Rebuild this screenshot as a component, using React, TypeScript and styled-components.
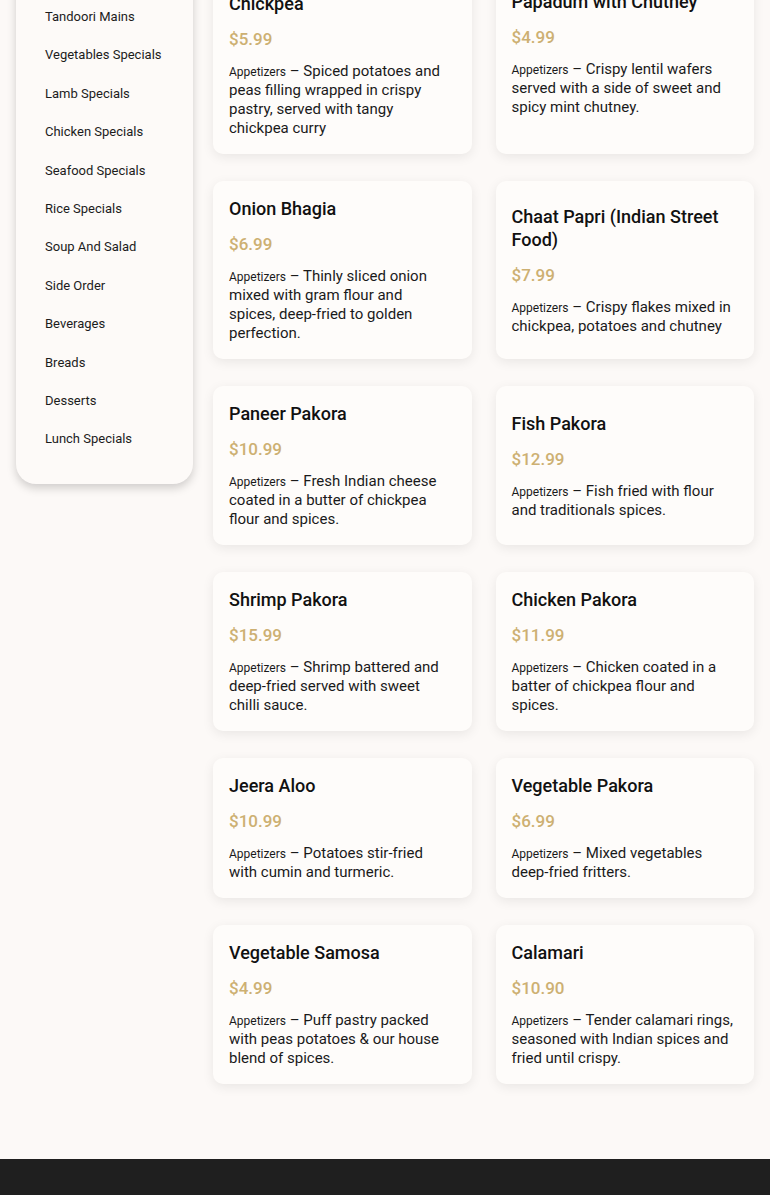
import React from 'react';
import styled, { createGlobalStyle } from 'styled-components';

const GlobalStyle = createGlobalStyle`
  html, body {
    margin: 0;
    padding: 0;
    background: #fcf9f7;
    font-family: Roboto, "Noto Sans", sans-serif;
    color: #151515;
    overflow: hidden;
  }
`;

const Page = styled.div`
  background: #fcf9f7;
`;

const MenuSection = styled.section`
  display: flex;
  align-items: flex-start;
  gap: 20px;
  padding: 20px 16px 75px;
  margin-top: -67px;
`;

const Sidebar = styled.nav`
  width: 177px;
  flex-shrink: 0;
  box-sizing: border-box;
  background: #fdfaf8;
  border-radius: 20px;
  box-shadow: 0 4px 10px rgba(0, 0, 0, 0.18);
  padding: 26px 0 26px 29px;
  margin-top: -20px;
`;

const CategoryLink = styled.a`
  display: flex;
  align-items: center;
  height: 38.4px;
  font-size: 13px;
  color: #1c1c1c;
  text-decoration: none;
`;

const Grid = styled.div`
  flex: 1;
  display: grid;
  grid-template-columns: 1fr 1fr;
  gap: 27px 24px;
`;

const Card = styled.article`
  background: #fefcfa;
  border-radius: 10px;
  box-shadow: 0 3px 12px rgba(0, 0, 0, 0.08);
  padding: 16px 20px 16px 16px;
  display: flex;
  flex-direction: column;
  justify-content: center;
`;

const Title = styled.h3`
  margin: 0 0 12px;
  font-size: 18px;
  line-height: 23px;
  font-weight: 500;
  color: #111;
`;

const Price = styled.div`
  font-size: 17px;
  line-height: 24px;
  font-weight: 500;
  color: #cdb072;
  margin-bottom: 11px;
`;

const Description = styled.p`
  margin: 0;
  font-size: 15px;
  line-height: 19px;
  color: #1a1a1a;
`;

const Category = styled.span`
  font-size: 12px;
  line-height: 1;
`;

const Footer = styled.footer`
  background: #1f1f1f;
  height: 200px;
`;

const categories = [
  'Appetizers',
  'Tandoori Mains',
  'Vegetables Specials',
  'Lamb Specials',
  'Chicken Specials',
  'Seafood Specials',
  'Rice Specials',
  'Soup And Salad',
  'Side Order',
  'Beverages',
  'Breads',
  'Desserts',
  'Lunch Specials',
];

const items = [
  { name: 'Samosa Chaat with Chickpea', price: '$5.99', desc: 'Spiced potatoes and peas filling wrapped in crispy pastry, served with tangy chickpea curry' },
  { name: 'Papadum with Chutney', price: '$4.99', desc: 'Crispy lentil wafers served with a side of sweet and spicy mint chutney.' },
  { name: 'Onion Bhagia', price: '$6.99', desc: 'Thinly sliced onion mixed with gram flour and spices, deep-fried to golden perfection.' },
  { name: 'Chaat Papri (Indian Street Food)', price: '$7.99', desc: 'Crispy flakes mixed in chickpea, potatoes and chutney' },
  { name: 'Paneer Pakora', price: '$10.99', desc: 'Fresh Indian cheese coated in a butter of chickpea flour and spices.' },
  { name: 'Fish Pakora', price: '$12.99', desc: 'Fish fried with flour and traditionals spices.' },
  { name: 'Shrimp Pakora', price: '$15.99', desc: 'Shrimp battered and deep-fried served with sweet chilli sauce.' },
  { name: 'Chicken Pakora', price: '$11.99', desc: 'Chicken coated in a batter of chickpea flour and spices.' },
  { name: 'Jeera Aloo', price: '$10.99', desc: 'Potatoes stir-fried with cumin and turmeric.' },
  { name: 'Vegetable Pakora', price: '$6.99', desc: 'Mixed vegetables deep-fried fritters.' },
  { name: 'Vegetable Samosa', price: '$4.99', desc: 'Puff pastry packed with peas potatoes & our house blend of spices.' },
  { name: 'Calamari', price: '$10.90', desc: 'Tender calamari rings, seasoned with Indian spices and fried until crispy.' },
];

const App: React.FC = () => {
  return (
    <Page>
      <GlobalStyle />
      <MenuSection>
        <Sidebar>
          {categories.map((c) => (
            <CategoryLink key={c} href="#">{c}</CategoryLink>
          ))}
        </Sidebar>
        <Grid>
          {items.map((item) => (
            <Card key={item.name}>
              <Title>{item.name}</Title>
              <Price>{item.price}</Price>
              <Description>
                <Category>Appetizers</Category> – {item.desc}
              </Description>
            </Card>
          ))}
        </Grid>
      </MenuSection>
      <Footer />
    </Page>
  );
};

export default App;
